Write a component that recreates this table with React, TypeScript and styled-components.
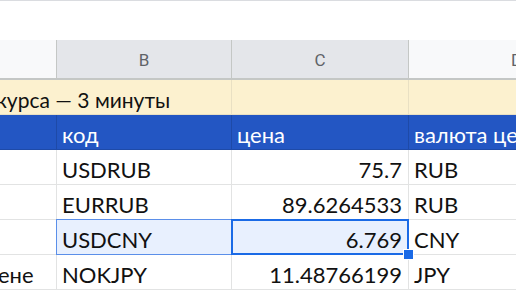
import styled, { createGlobalStyle, css } from 'styled-components'

const GlobalStyle = createGlobalStyle`
  html, body {
    margin: 0;
    padding: 0;
    background: #ffffff;
    overflow: hidden;
  }
  * {
    box-sizing: border-box;
  }
`

const Sheet = styled.div`
  width: 516px;
  height: 290px;
  overflow: hidden;
  font-family: Lato, 'Noto Sans', sans-serif;
  background: #ffffff;
`

const FormulaStrip = styled.div`
  height: 40px;
  border-top: 1px solid #dadce0;
  background: #ffffff;
`

const Grid = styled.div`
  display: grid;
  grid-template-columns: 57px 175px 177px 140px;
  grid-template-rows: 40px repeat(6, 35px);
`

const ColumnHeader = styled.div<{ $active?: boolean; $offset?: number }>`
  display: flex;
  align-items: center;
  justify-content: ${(p) => (p.$offset ? 'flex-start' : 'center')};
  padding-left: ${(p) => p.$offset ?? 0}px;
  padding-top: 1px;
  background: ${(p) => (p.$active ? '#e4e6ea' : '#f8f9fa')};
  border-right: 1px solid #c4c7c5;
  border-bottom: 2px solid #c4c7c5;
  color: #5f6368;
  font-family: Roboto, 'Liberation Sans', sans-serif;
  font-size: 17px;
`

type Tone = 'plain' | 'note' | 'head'

const toneStyles = {
  plain: css`
    background: #ffffff;
    color: #111111;
    border-right: 1px solid #e2e3e3;
    border-bottom: 1px solid #e2e3e3;
  `,
  note: css`
    background: #fcf1cf;
    color: #111111;
    font-size: 21px;
    border-right: 1px solid #e9e0c3;
    border-bottom: 1px solid #e9e0c3;
  `,
  head: css`
    background: #2356c3;
    color: #ffffff;
    border-right: 1px solid #1e4aa8;
    border-bottom: 1px solid #1e4aa8;
  `,
}

const Cell = styled.div<{
  $tone?: Tone
  $right?: boolean
  $span?: number
  $range?: boolean
  $active?: boolean
}>`
  position: relative;
  display: flex;
  align-items: center;
  justify-content: ${(p) => (p.$right ? 'flex-end' : 'flex-start')};
  padding: 5px 6px 0 5px;
  font-size: 22px;
  white-space: nowrap;
  ${(p) => toneStyles[p.$tone ?? 'plain']}
  ${(p) => p.$span && css`grid-column: span ${p.$span};`}
  ${(p) =>
    p.$range &&
    css`
      background: #e8f0fe;
      &::after {
        content: '';
        position: absolute;
        top: -1px;
        left: -1px;
        right: 0;
        bottom: -1px;
        border: 1px solid #5b8fe9;
        border-right: none;
        pointer-events: none;
      }
    `}
  ${(p) =>
    p.$active &&
    css`
      background: #e8f0fe;
      &::after {
        content: '';
        position: absolute;
        top: -1px;
        left: -1px;
        right: -1px;
        bottom: -1px;
        border: 2px solid #1a6ae6;
        pointer-events: none;
      }
    `}
`

const Clipped = styled.span<{ $shift: number }>`
  margin-left: ${(p) => p.$shift}px;
`

const FillHandle = styled.span`
  position: absolute;
  right: -6px;
  bottom: -6px;
  width: 11px;
  height: 11px;
  background: #1a6ae6;
  border: 1px solid #ffffff;
  z-index: 2;
`

const rows = [
  { code: 'USDRUB', price: '75.7', cur: 'RUB' },
  { code: 'EURRUB', price: '89.6264533', cur: 'RUB' },
  { code: 'USDCNY', price: '6.769', cur: 'CNY', selected: true },
  { code: 'NOKJPY', price: '11.48766199', cur: 'JPY', lead: 'ене' },
]

export default function App() {
  return (
    <Sheet>
      <GlobalStyle />
      <FormulaStrip />
      <Grid>
        <ColumnHeader />
        <ColumnHeader $active>B</ColumnHeader>
        <ColumnHeader $active>C</ColumnHeader>
        <ColumnHeader $offset={102}>D</ColumnHeader>

        <Cell $tone="note" $span={2}>
          <Clipped $shift={-9}>курса — 3 минуты</Clipped>
        </Cell>
        <Cell $tone="note" />
        <Cell $tone="note" />

        <Cell $tone="head" />
        <Cell $tone="head">код</Cell>
        <Cell $tone="head">цена</Cell>
        <Cell $tone="head">валюта цены</Cell>

        {rows.map((r) => (
          <Row key={r.code} {...r} />
        ))}
      </Grid>
    </Sheet>
  )
}

function Row({
  code,
  price,
  cur,
  lead,
  selected,
}: {
  code: string
  price: string
  cur: string
  lead?: string
  selected?: boolean
}) {
  return (
    <>
      <Cell>{lead && <Clipped $shift={-7}>{lead}</Clipped>}</Cell>
      <Cell $range={selected}>{code}</Cell>
      <Cell $right $active={selected}>
        {price}
        {selected && <FillHandle />}
      </Cell>
      <Cell>{cur}</Cell>
    </>
  )
}
